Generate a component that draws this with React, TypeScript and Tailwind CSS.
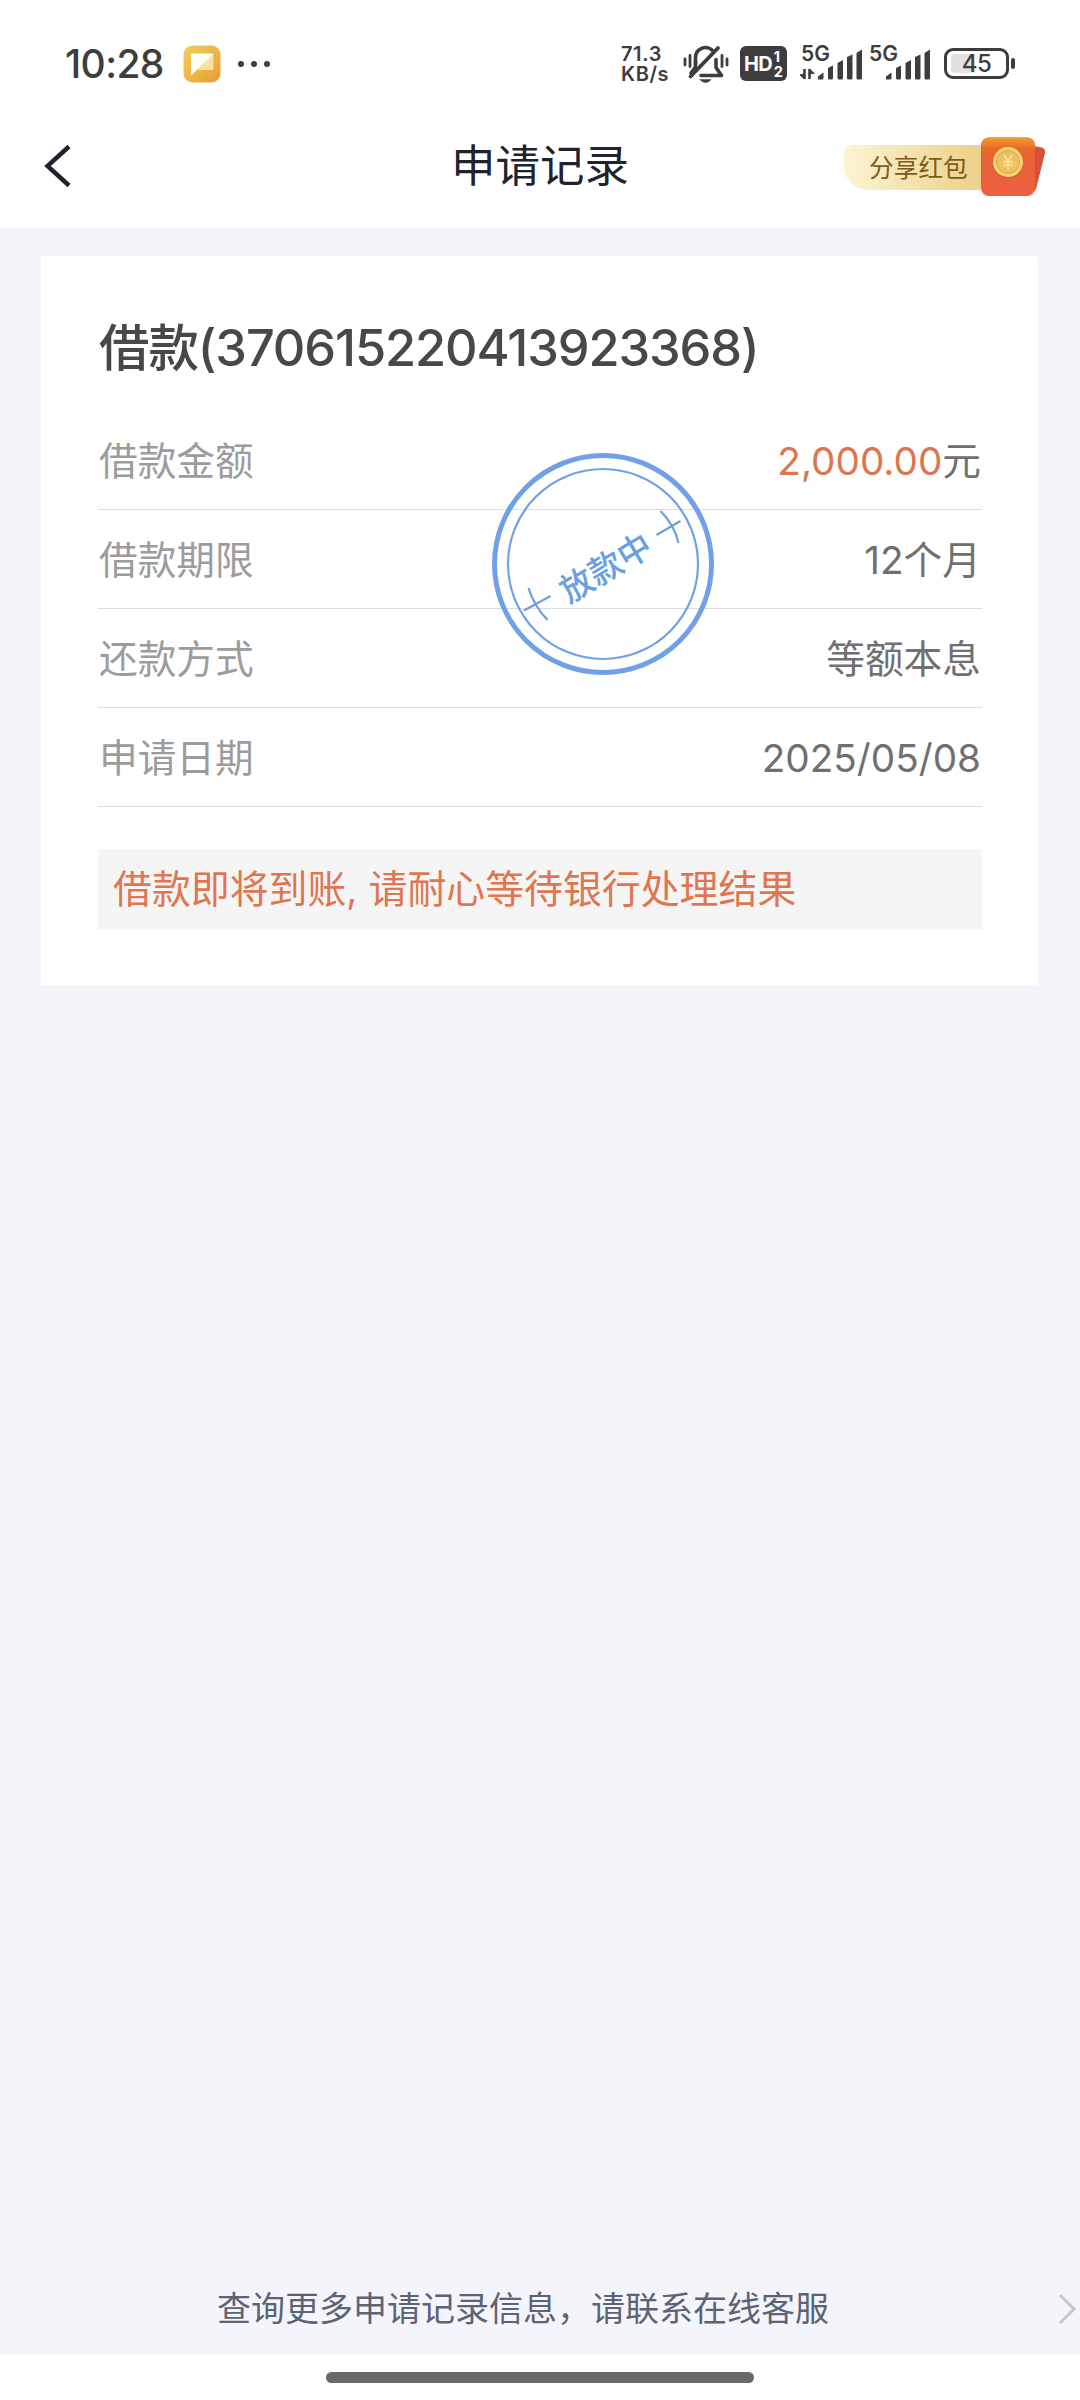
import React from "react";

const rows = [
  { label: "借款金额", amount: "2,000.00", value: "元" },
  { label: "借款期限", value: "12个月" },
  { label: "还款方式", value: "等额本息" },
  { label: "申请日期", value: "2025/05/08" },
];

function AppBadge() {
  return (
    <svg className="ml-[19.500px] h-[38px] w-[38px] shrink-0" viewBox="0 0 38 38">
      <defs>
        <linearGradient id="badge" x1="0" y1="0" x2="1" y2="1">
          <stop offset="0" stopColor="#efd25a" />
          <stop offset="1" stopColor="#eb9a33" />
        </linearGradient>
      </defs>
      <rect x="0.5" y="0.5" width="37" height="37" rx="9" fill="url(#badge)" />
      <path d="M8 8.5h21.500q1 0 1 1L8 30.500z" fill="#fffdf8" />
      <path d="M30.500 9v16h-16.500z" fill="#fae0a0" />
    </svg>
  );
}

function MutedBell() {
  return (
    <svg className="h-[40px] w-[46px] shrink-0" viewBox="0 0 46 40" fill="none" stroke="#3d3d3d" strokeLinecap="round" strokeLinejoin="round">
      <path d="M12.500 20v-6.500a10 10 0 0 1 17 -7" strokeWidth="3.600" />
      <path d="M18 31.500h20.500l-5.500 -8v-8" strokeWidth="3.600" />
      <path d="M12.500 18v5l-4.500 6" strokeWidth="3.600" />
      <path d="M7.500 32.500L35 4" strokeWidth="3.800" />
      <path d="M2 15v6M7 11.500v11M39 11.500v11M44 15v6" strokeWidth="2.800" />
      <path d="M17 35.500h11q-2 3 -5.500 3t-5.500 -3z" fill="#3d3d3d" strokeWidth="0.500" />
    </svg>
  );
}

function HdBadge() {
  return (
    <div className="ml-[11px] flex h-[35px] w-[47px] shrink-0 items-center justify-center gap-[2px] rounded-[6px] bg-[#3d3d3d] font-bold text-white">
      <span className="text-[20px] leading-none tracking-[-0.8px]">HD</span>
      <span className="flex flex-col text-[14.500px] leading-[15px]">
        <span>1</span>
        <span>2</span>
      </span>
    </div>
  );
}

function Signal({ arrows }: { arrows?: boolean }) {
  return (
    <div className="relative h-[36px] w-[64px] shrink-0">
      <span className="absolute left-[1px] top-[-2px] text-[21px] font-semibold leading-[20px] text-[#3d3d3d]">5G</span>
      <svg className="absolute inset-0 h-[36px] w-[64px]" viewBox="0 0 64 36" fill="#3d3d3d">
        {arrows && (
          <>
            <path d="M4.500 23v10M9.500 33v-10" stroke="#3d3d3d" strokeWidth="2.600" />
            <path d="M-1 28.500l5.500 5v-6zM15 27.500l-5.500 -5v6z" />
          </>
        )}
        <path d="M18 33v-2.500l5.500 -4v5.500q0 1.500 -1.500 1.500h-3q-1 0 -1 -0.500z" />
        <path d="M28 22l5 -2.500v12.500q0 1.500 -1.500 1.500h-2q-1.500 0 -1.500 -1.500z" />
        <path d="M37.500 17l5.500 -3v18q0 1.500 -1.500 1.500h-2.500q-1.500 0 -1.500 -1.500z" />
        <path d="M47 11l5.500 -2.500v23.500q0 1.500 -1.500 1.500h-2.500q-1.500 0 -1.500 -1.500z" />
        <path d="M56.500 7l5.500 -3.500v28.500q0 1.500 -1.500 1.500h-2.500q-1.500 0 -1.500 -1.500z" />
      </svg>
    </div>
  );
}

function Battery() {
  return (
    <div className="ml-[12px] flex shrink-0 items-center gap-[2px]">
      <div className="relative h-[31px] w-[65px] rounded-[9px] border-[3px] border-[#3d3d3d]">
        <div className="absolute left-[4px] top-[3px] h-[19px] w-[24px] rounded-l-[4px] bg-[#e2e2e2]" />
        <span className="absolute inset-0 flex items-center justify-center text-[24px] font-medium leading-none tracking-[-0.5px] text-[#3d3d3d]">45</span>
      </div>
      <div className="h-[11px] w-[4px] rounded-[2px] bg-[#3d3d3d]" />
    </div>
  );
}

function StatusBar() {
  return (
    <div className="flex h-[127px] items-center pl-[65px] pr-[65px] text-[#3d3d3d]">
      <span className="w-[98px] whitespace-nowrap text-[39px] font-medium leading-none tracking-[-0.6px]">10:28</span>
      <AppBadge />
      <div className="ml-[17px] flex gap-[7px]">
        <i className="h-[6px] w-[6px] rounded-full bg-[#3d3d3d]" />
        <i className="h-[6px] w-[6px] rounded-full bg-[#3d3d3d]" />
        <i className="h-[6px] w-[6px] rounded-full bg-[#3d3d3d]" />
      </div>
      <div className="ml-auto flex items-center">
        <div className="w-[62px] whitespace-nowrap text-[20px] font-semibold leading-[20px] tracking-[0.6px]">
          <div>71.3</div>
          <div>KB/s</div>
        </div>
        <MutedBell />
        <HdBadge />
        <div className="ml-[13px] flex gap-[4px]">
          <Signal arrows />
          <Signal />
        </div>
        <Battery />
      </div>
    </div>
  );
}

function RedPacket() {
  return (
    <svg className="-ml-px h-[62px] w-[68px] shrink-0" viewBox="0 0 68 62">
      <defs>
        <linearGradient id="packet" x1="0" y1="0" x2="0" y2="1">
          <stop offset="0" stopColor="#e8622c" />
          <stop offset="1" stopColor="#ec5f44" />
        </linearGradient>
        <linearGradient id="flap" x1="0" y1="0" x2="0" y2="1">
          <stop offset="0" stopColor="#f39a2c" />
          <stop offset="0.450" stopColor="#e8692c" />
          <stop offset="1" stopColor="#e8592f" />
        </linearGradient>
      </defs>
      <path d="M52 9.500l10 2q4 1.500 3 5.500l-9 36q-1 2 -5 3z" fill="#d9503a" />
      <rect x="1" y="1.500" width="54" height="58.500" rx="8" fill="url(#packet)" />
      <path d="M1 17V9.500a8 8 0 0 1 8 -8h38a8 8 0 0 1 8 8v7.500Q45 27 28 27T1 17z" fill="url(#flap)" />
      <circle cx="28" cy="27.500" r="15" fill="#c9562a" opacity="0.350" />
      <circle cx="28" cy="26" r="15" fill="#f8d573" />
      <circle cx="28" cy="26" r="11.500" fill="#f0c163" stroke="#dda34a" strokeWidth="1" />
      <path d="M24 19.500l4 5 4 -5M28 24.500v9M23.500 25.500h9M23.500 29h9" fill="none" stroke="#fbe9a8" strokeWidth="1.500" />
    </svg>
  );
}

function Header() {
  return (
    <header className="grid h-[101px] grid-cols-[1fr_auto_1fr] items-start">
      <svg className="ml-[44px] mt-[17px] h-[44px] w-[28px]" viewBox="0 0 28 44" fill="none" stroke="#20232e" strokeWidth="4.400">
        <path d="M25 2.500L3.500 22L25 41.500" />
      </svg>
      <h1 className="mt-[9px] text-[44.500px] leading-[60px] text-[#20232e]">申请记录</h1>
      <div className="mr-[32px] mt-[9px] flex items-center justify-end">
        <div className="flex h-[45px] w-[137px] items-center rounded-bl-[24px] rounded-tl-[8px] bg-linear-to-r from-[#fcf4d2] to-[#edd088] pl-[25px] pt-[3px] text-[24.700px] leading-none text-[#7d5a1c]">
          <span className="whitespace-nowrap">分享红包</span>
        </div>
        <RedPacket />
      </div>
    </header>
  );
}

function Stamp() {
  return (
    <svg className="absolute left-[450px] top-[196px] h-[224px] w-[224px]" viewBox="-112 -112 224 224" fill="none" stroke="#6fa0e8">
      <circle r="108.500" strokeWidth="5" />
      <circle r="95" strokeWidth="2.200" />
      <g stroke="#6a9fe0" strokeWidth="2.200">
        <path d="M-79 46.500L-52.500 32M-74.500 24Q-69 42 -55.500 56" />
        <path d="M53.500 -29L77.500 -43M57.500 -53Q72 -38 75.500 -21" />
      </g>
      <text x="2.500" y="16" transform="rotate(-31 2.500 3.500)" textAnchor="middle" fontSize="33.500" fontWeight="500" fill="#6a9fe0" stroke="none">
        放款中
      </text>
    </svg>
  );
}

export default function App() {
  return (
    <div className="flex h-[2400px] w-[1080px] flex-col overflow-hidden bg-white font-['Inter','Noto_Sans_CJK_SC',sans-serif]">
      <StatusBar />
      <Header />
      <main className="flex flex-1 flex-col bg-[#f4f5fb] pt-[28px]">
        <section className="relative ml-[41px] h-[729px] w-[997px] rounded-[2px] bg-white pl-[57px] pr-[56px] pt-[56px]">
          <h2 className="whitespace-nowrap pl-px text-[50.500px] font-medium leading-[72px] tracking-[-1.1px] text-[#484848]">借款(370615220413923368)</h2>
          <dl className="mt-[27px]">
            {rows.map((row) => (
              <div key={row.label} className="flex h-[99px] items-center justify-between border-b border-[#dcdcdc] pl-[1px] pr-px pt-[2px] text-[38.700px]">
                <dt className="text-[#9c9c9c]">{row.label}</dt>
                <dd className="text-[#707070]">
                  {row.amount && <span className="text-[#dd7550]">{row.amount}</span>}
                  {row.value}
                </dd>
              </div>
            ))}
          </dl>
          <p className="mt-[42px] flex h-[80px] items-center whitespace-pre bg-[#f5f5f5] pl-[15px] pt-px text-[38.900px] text-[#df7650]">借款即将到账, 请耐心等待银行处理结果</p>
          <Stamp />
        </section>
        <footer className="mt-auto flex h-[71px] items-start">
          <p className="ml-[217px] text-[34px] leading-[50px] text-[#5c6375]">查询更多申请记录信息，请联系在线客服</p>
          <svg className="ml-auto mr-[2px] mt-[9px] h-[32px] w-[20px]" viewBox="0 0 20 32" fill="none" stroke="#c5c8d2" strokeWidth="3">
            <path d="M2 2L16 16L2 30" />
          </svg>
        </footer>
      </main>
      <div className="flex h-[45px] justify-center bg-white pt-[17px]">
        <div className="h-[11px] w-[428px] rounded-full bg-[#696969]" />
      </div>
    </div>
  );
}
